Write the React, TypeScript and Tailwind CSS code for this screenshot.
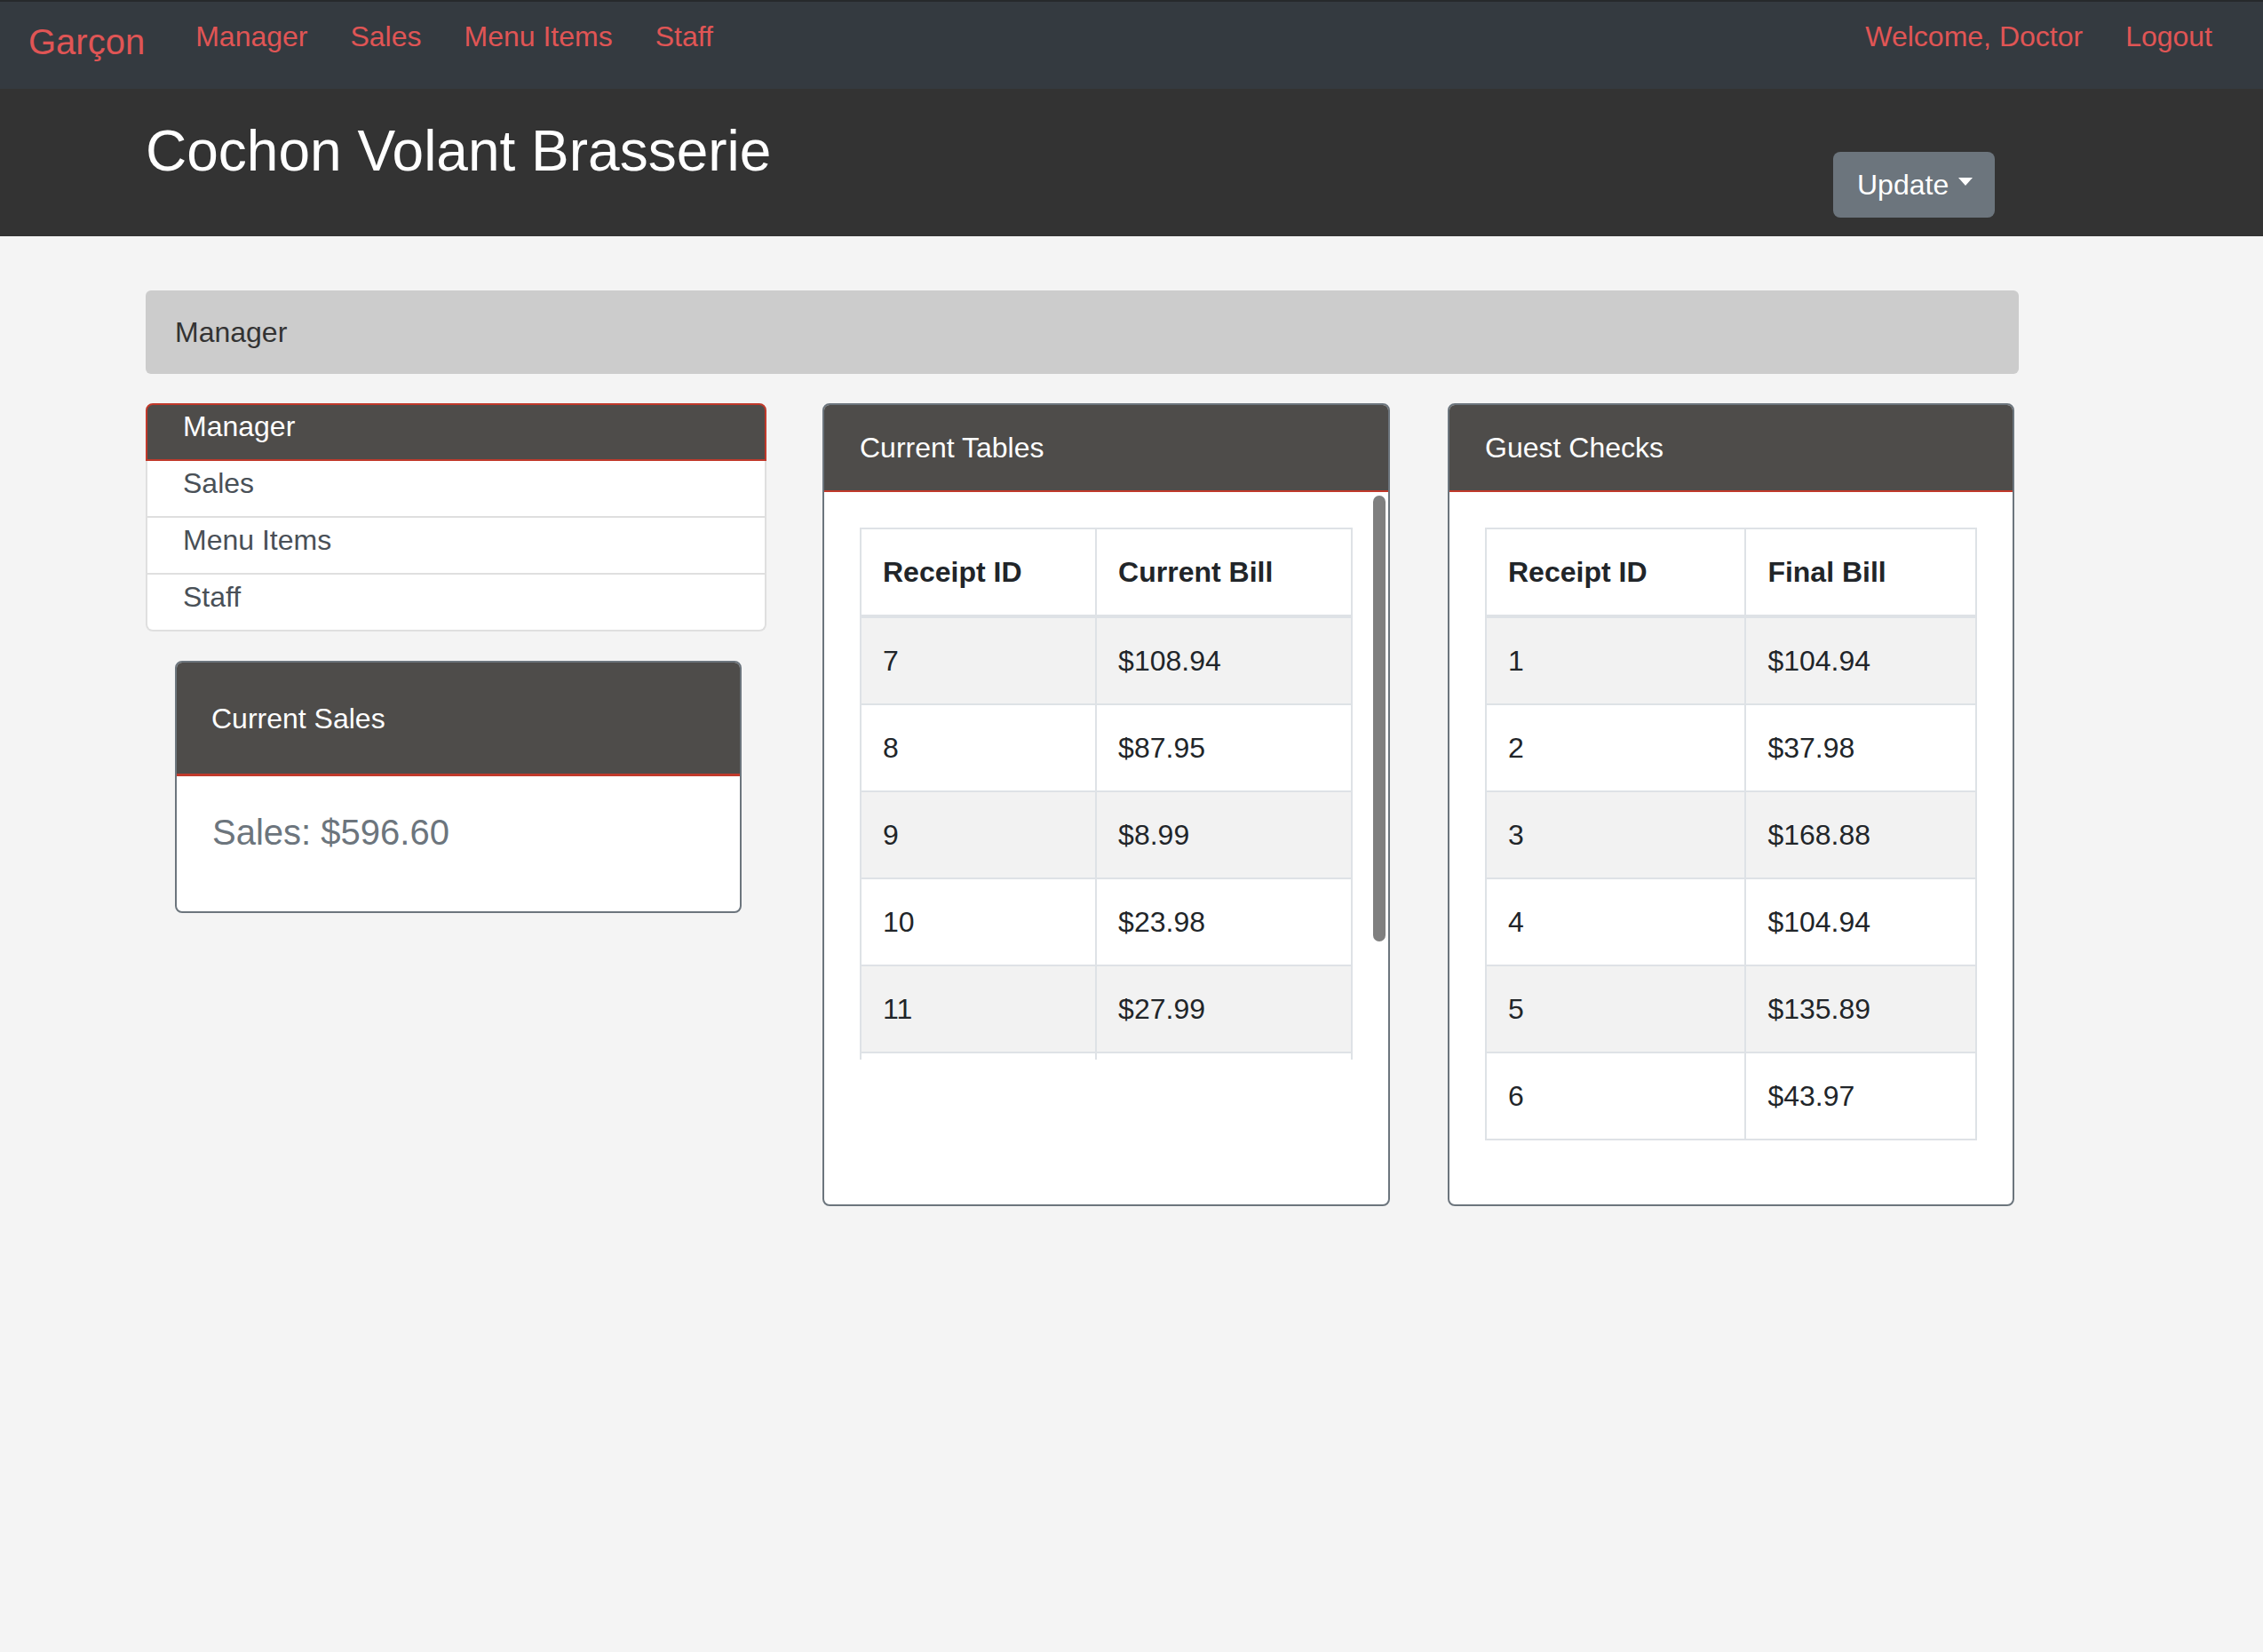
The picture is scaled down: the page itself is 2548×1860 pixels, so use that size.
import React from "react";

const currentTables = [
  { id: 7, bill: "$108.94" },
  { id: 8, bill: "$87.95" },
  { id: 9, bill: "$8.99" },
  { id: 10, bill: "$23.98" },
  { id: 11, bill: "$27.99" },
  { id: 12, bill: "$54.97" },
  { id: 13, bill: "$19.99" },
];

const guestChecks = [
  { id: 1, bill: "$104.94" },
  { id: 2, bill: "$37.98" },
  { id: 3, bill: "$168.88" },
  { id: 4, bill: "$104.94" },
  { id: 5, bill: "$135.89" },
  { id: 6, bill: "$43.97" },
];

const BillTable = ({
  rows,
  billLabel,
  className = "",
}: {
  rows: { id: number; bill: string }[];
  billLabel: string;
  className?: string;
}) => (
  <table className={`w-full border-collapse text-[32px] leading-[48px] text-[#212529] ${className}`}>
    <thead>
      <tr>
        <th className="border-2 border-b-4 border-[#dee2e6] p-[24px] text-left font-bold">
          Receipt ID
        </th>
        <th className="border-2 border-b-4 border-[#dee2e6] p-[24px] text-left font-bold">
          {billLabel}
        </th>
      </tr>
    </thead>
    <tbody>
      {rows.map((row, i) => (
        <tr key={row.id} className={i % 2 === 0 ? "bg-[#f2f2f2]" : "bg-white"}>
          <td className="border-2 border-[#dee2e6] p-[24px]">{row.id}</td>
          <td className="border-2 border-[#dee2e6] p-[24px]">{row.bill}</td>
        </tr>
      ))}
    </tbody>
  </table>
);

const CardHeader = ({ title }: { title: string }) => (
  <div className="flex h-[98px] items-center border-b-2 border-[#c0392b] bg-[#4e4c4a] pl-[40px] text-[32px] leading-[48px] text-white">
    {title}
  </div>
);

const App = () => {
  return (
    <div className="min-h-[1860px] bg-[#f4f4f4] font-['Liberation_Sans',Arial,sans-serif]">
      {/* Top nav */}
      <nav className="flex h-[100px] items-start border-t-2 border-[#26292c] bg-[#343a40] pl-[32px] pr-[57px] pt-[15px] text-[#e05555]">
        <a className="text-[40px] leading-[60px]">Garçon</a>
        <div className="ml-[57px] flex gap-[48px] text-[32px] leading-[48px]">
          <a>Manager</a>
          <a>Sales</a>
          <a>Menu Items</a>
          <a>Staff</a>
        </div>
        <div className="ml-auto flex gap-[48px] text-[32px] leading-[48px]">
          <a>Welcome, Doctor</a>
          <a>Logout</a>
        </div>
      </nav>

      {/* Restaurant header */}
      <header className="h-[166px] bg-[#333333] pl-[164px]">
        <div className="flex w-[2109px] items-start justify-between">
          <h1 className="mt-[32px] text-[64px] leading-[77px] text-white">
            Cochon Volant Brasserie
          </h1>
          <button className="mr-[27px] mt-[71px] flex h-[74px] w-[182px] items-center rounded-[8px] bg-[#6c757d] pl-[27px] text-[32px] leading-[48px] text-white">
            Update
            <span className="mb-[7px] ml-[11px] inline-block border-x-[8px] border-t-[9px] border-x-transparent border-t-white" />
          </button>
        </div>
      </header>

      {/* Content */}
      <main className="pl-[164px] pt-[61px]">
        <div className="flex h-[94px] w-[2109px] items-center rounded-[6px] bg-[#cccccc] pl-[33px] text-[32px] leading-[48px] text-[#333333]">
          Manager
        </div>

        <div className="mt-[33px] flex">
          {/* Left column */}
          <div className="flex w-[699px] flex-col items-start">
            <div className="w-full text-[32px] leading-[48px]">
              <div className="h-[65px] rounded-t-[8px] border-2 border-[#c0392b] bg-[#4e4c4a] pl-[40px] text-white">
                Manager
              </div>
              <div className="h-[64px] border-x-2 border-b-2 border-[#dfdfdf] bg-white pl-[40px] pt-[1px] text-[#495057]">
                Sales
              </div>
              <div className="h-[64px] border-x-2 border-b-2 border-[#dfdfdf] bg-white pl-[40px] pt-[1px] text-[#495057]">
                Menu Items
              </div>
              <div className="h-[64px] rounded-b-[8px] border-x-2 border-b-2 border-[#dfdfdf] bg-white pl-[40px] pt-[1px] text-[#495057]">
                Staff
              </div>
            </div>

            <div className="ml-[33px] mt-[33px] w-[638px] overflow-hidden rounded-[8px] border-2 border-[#6c757d] bg-white">
              <div className="flex h-[128px] items-center border-b-[3px] border-[#c0392b] bg-[#4e4c4a] pl-[39px] text-[32px] leading-[48px] text-white">
                Current Sales
              </div>
              <div className="h-[152px] pl-[40px] pt-[33px] text-[40px] leading-[60px] text-[#6c757d]">
                Sales: $596.60
              </div>
            </div>
          </div>

          {/* Current Tables */}
          <div className="ml-[63px] flex w-[639px] flex-col overflow-hidden rounded-[8px] border-2 border-[#6c757d] bg-white">
            <CardHeader title="Current Tables" />
            <div className="relative">
              <div className="h-[639px] overflow-y-auto px-[40px] pt-[40px] [scrollbar-width:none]">
                <BillTable rows={currentTables} billLabel="Current Bill" />
              </div>
              <div className="absolute right-[3px] top-[4px] h-[502px] w-[14px] rounded-full bg-[#7f7f7f]" />
            </div>
          </div>

          {/* Guest Checks */}
          <div className="ml-[65px] w-[638px] overflow-hidden rounded-[8px] border-2 border-[#6c757d] bg-white">
            <CardHeader title="Guest Checks" />
            <div className="p-[40px]">
              <BillTable rows={guestChecks} billLabel="Final Bill" className="mb-[32px]" />
            </div>
          </div>
        </div>
      </main>
    </div>
  );
};

export default App;
